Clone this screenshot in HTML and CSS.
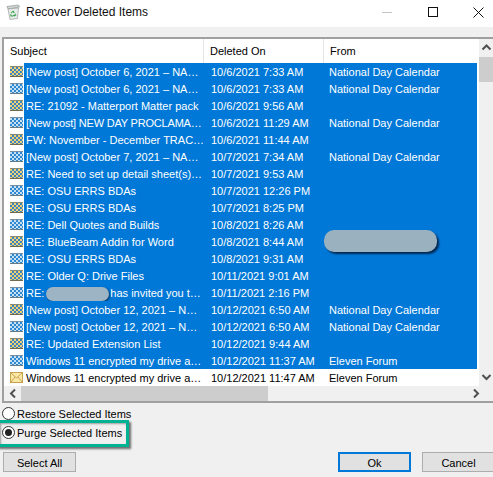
FILE: index.html
```html
<!DOCTYPE html>
<html lang="en">
<head>
<meta charset="utf-8">
<title>Recover Deleted Items</title>
<link rel="stylesheet" href="styles.css">
</head>
<body>
<div class="window">
  <header class="titlebar">
    <svg class="app-icon" width="16" height="16" viewBox="0 0 16 16" aria-hidden="true">
      <path d="M2 2.500 13.500 1l1 2-11.500 2z" fill="#d4d8d6" stroke="#8d9391" stroke-width=".7"/>
      <path d="M3 5l10.500-1-1 10.500-7.500 1z" fill="#e8ecea" stroke="#9a9f9d" stroke-width=".7"/>
      <path d="M8.300 6.500l1.600 2.200-1.300.4-1-1.200-1 1.500-1-.7zM10.500 9.400l1 2-2 .6v1l-1.700-1.500 1.700-1.400v.8l1-.3-.6-1zM5 10l1 .4.900 1.200h1v1H5.600z" fill="#35a34a"/>
    </svg>
    <span class="title">Recover Deleted Items</span>
    <div class="controls">
      <span class="ctl-min"></span>
      <span class="ctl-max"></span>
      <svg class="ctl-close" width="11" height="11" viewBox="0 0 11 11" aria-hidden="true"><path d="M.5.500l10 10M10.500.500l-10 10" stroke="#111" stroke-width="1" fill="none"/></svg>
    </div>
  </header>

  <main class="body">
    <section class="list">
      <div class="list-main">
        <div class="list-view">
          <div class="head">
            <div class="hcell hsubject">Subject</div>
            <div class="hcell hdate">Deleted On</div>
            <div class="hcell hfrom">From</div>
          </div>
          <div class="row"><i class="ico"></i><span class="sub">[New post] October 6, 2021 – NA…</span><span class="date">10/6/2021 7:33 AM</span><span class="from">National Day Calendar</span></div>
          <div class="row"><i class="ico"></i><span class="sub">[New post] October 6, 2021 – NA…</span><span class="date">10/6/2021 7:33 AM</span><span class="from">National Day Calendar</span></div>
          <div class="row"><i class="ico"></i><span class="sub">RE: 21092 - Matterport Matter pack</span><span class="date">10/6/2021 9:56 AM</span><span class="from"></span></div>
          <div class="row"><i class="ico"></i><span class="sub sub-tight">[New post] NEW DAY PROCLAMA…</span><span class="date">10/6/2021 11:29 AM</span><span class="from">National Day Calendar</span></div>
          <div class="row"><i class="ico"></i><span class="sub">FW: November - December TRAC…</span><span class="date">10/6/2021 11:44 AM</span><span class="from"></span></div>
          <div class="row"><i class="ico"></i><span class="sub">[New post] October 7, 2021 – NA…</span><span class="date">10/7/2021 7:34 AM</span><span class="from">National Day Calendar</span></div>
          <div class="row"><i class="ico"></i><span class="sub">RE: Need to set up detail sheet(s)…</span><span class="date">10/7/2021 9:53 AM</span><span class="from"></span></div>
          <div class="row"><i class="ico"></i><span class="sub">RE: OSU ERRS BDAs</span><span class="date">10/7/2021 12:26 PM</span><span class="from"></span></div>
          <div class="row"><i class="ico"></i><span class="sub">RE: OSU ERRS BDAs</span><span class="date">10/7/2021 8:25 PM</span><span class="from"></span></div>
          <div class="row"><i class="ico"></i><span class="sub">RE: Dell Quotes and Builds</span><span class="date">10/8/2021 8:26 AM</span><span class="from"></span></div>
          <div class="row"><i class="ico"></i><span class="sub">RE: BlueBeam Addin for Word</span><span class="date">10/8/2021 8:44 AM</span><span class="from from-redacted"><b class="redact-large"></b></span></div>
          <div class="row"><i class="ico"></i><span class="sub">RE: OSU ERRS BDAs</span><span class="date">10/8/2021 9:31 AM</span><span class="from"></span></div>
          <div class="row"><i class="ico"></i><span class="sub">RE: Older Q: Drive Files</span><span class="date">10/11/2021 9:01 AM</span><span class="from"></span></div>
          <div class="row"><i class="ico"></i><span class="sub">RE:<b class="redact-small"></b>has invited you t…</span><span class="date">10/11/2021 2:16 PM</span><span class="from"></span></div>
          <div class="row"><i class="ico"></i><span class="sub">[New post] October 12, 2021 – N…</span><span class="date">10/12/2021 6:50 AM</span><span class="from">National Day Calendar</span></div>
          <div class="row"><i class="ico"></i><span class="sub">[New post] October 12, 2021 – N…</span><span class="date">10/12/2021 6:50 AM</span><span class="from">National Day Calendar</span></div>
          <div class="row"><i class="ico"></i><span class="sub">RE: Updated Extension List</span><span class="date">10/12/2021 9:44 AM</span><span class="from"></span></div>
          <div class="row"><i class="ico"></i><span class="sub">Windows 11 encrypted my drive a…</span><span class="date">10/12/2021 11:37 AM</span><span class="from">Eleven Forum</span></div>
          <div class="row row-plain">
            <svg class="env" width="13" height="11" viewBox="0 0 13 11" aria-hidden="true"><rect x=".5" y=".5" width="12" height="10" fill="#fbe7a6" stroke="#c9a24e"/><path d="M.5.500 6.500 6l6-5.500M.5 10.500 5 5M12.500 10.500 8 5" fill="none" stroke="#c9a24e"/></svg>
            <span class="sub">Windows 11 encrypted my drive a…</span><span class="date">10/12/2021 11:47 AM</span><span class="from">Eleven Forum</span>
          </div>
        </div>
        <div class="vscroll">
          <svg class="arrow" width="15" height="18" viewBox="0 0 15 18" aria-hidden="true"><path d="M3.500 10.500l4-4 4 4" fill="none" stroke="#505050" stroke-width="2"/></svg>
          <div class="vthumb"></div>
          <svg class="arrow arrow-bottom" width="15" height="18" viewBox="0 0 15 18" aria-hidden="true"><path d="M3.500 7l4 4 4-4" fill="none" stroke="#505050" stroke-width="2"/></svg>
        </div>
      </div>
      <div class="hscroll">
        <svg class="harrow" width="17" height="15" viewBox="0 0 17 15" aria-hidden="true"><path d="M11 3.500l-4 4 4 4" fill="none" stroke="#505050" stroke-width="2"/></svg>
        <div class="hthumb"></div>
        <svg class="harrow harrow-right" width="17" height="15" viewBox="0 0 17 15" aria-hidden="true"><path d="M6 3.500l4 4-4 4" fill="none" stroke="#505050" stroke-width="2"/></svg>
      </div>
    </section>

    <div class="options">
      <label class="radio"><span class="dot"></span>Restore Selected Items</label>
      <label class="radio"><span class="dot dot-on"></span>Purge Selected Items</label>
      <div class="highlight"></div>
    </div>

    <footer class="buttons">
      <button class="btn" type="button">Select All</button>
      <div class="btn-right">
        <button class="btn btn-default" type="button">Ok</button>
        <button class="btn" type="button">Cancel</button>
      </div>
    </footer>
  </main>
</div>
</body>
</html>
```

FILE: styles.css
```css
* { box-sizing: border-box; }
html, body { margin: 0; padding: 0; overflow: hidden; }
body {
  width: 493px;
  height: 477px;
  background: #f0f0f0;
  font-family: "Liberation Sans", Arial, sans-serif;
  font-size: 11px;
  color: #000;
}
.window { width: 493px; height: 477px; display: flex; flex-direction: column; overflow: hidden; }

.titlebar { height: 27px; background: #fff; display: flex; align-items: center; padding-left: 5px; padding-bottom: 3px; flex: none; }
.app-icon { flex: none; }
.title { margin-left: 5px; font-size: 12px; color: #111; }
.controls { margin-left: auto; display: flex; align-items: center; height: 100%; }
.ctl-min { width: 10px; height: 1px; background: #c4c4c4; margin-right: 36px; }
.ctl-max { width: 10px; height: 10px; border: 1px solid #111; margin-right: 35px; }
.ctl-close { margin-right: 9px; }

.body { flex: 1; padding: 10px 0 0 2px; display: flex; flex-direction: column; min-height: 0; }

.list { border: 1px solid #a0a0a0; border-width: 2px 0 2px 2px; height: 366px; background: #f0f0f0; flex: none; }
.list-main { display: flex; height: 347px; }
.list-view { width: 475px; background: #fff; flex: none; }

.head { display: grid; grid-template-columns: 200px 120px 155px; height: 24px; background: #fff; }
.hcell { display: flex; align-items: center; border-right: 1px solid #e5e5e5; padding-left: 6px; }
.hfrom { border-right: 0; }

.row { display: grid; grid-template-columns: 20px 179px 120px 154px; height: 17px; line-height: 17px; white-space: nowrap; align-items: center; }
.row > span { background: #0078d7; color: #fff; height: 17px; padding-top: 1px; line-height: 16px; overflow: hidden; }
.row-plain > span { background: #fff; color: #000; }
.sub { padding-left: 2px; }
.sub-tight { letter-spacing: -.2px; }
.date { padding-left: 8px; }
.from { padding-left: 6px; }
.row > .from-redacted { position: relative; overflow: visible; }

.ico {
  display: block;
  width: 13px;
  height: 11px;
  margin-left: 6px;
  background: repeating-conic-gradient(#3f86c0 0 25%, #ecd078 0 50%) 0 0 / 4px 4px;
  border-top: 1px solid #8a8a70;
  border-bottom: 1px solid #6f6a50;
}
.row:nth-child(odd) .ico { background: repeating-conic-gradient(#2f88d0 0 25%, #c4e0f5 0 50%) 0 0 / 4px 4px; border-top-color: #7a90a0; border-bottom-color: #6a7a80; }
.env { margin-left: 6px; display: block; }

.redact-small {
  display: inline-block;
  width: 63px;
  height: 14px;
  margin: 0 1px 0 2px;
  vertical-align: middle;
  border-radius: 7px;
  background: #9cb4c4;
  box-shadow: 1px 1px 2px rgba(0, 20, 50, .7);
}
.redact-large {
  position: absolute;
  left: 1px;
  top: -3px;
  width: 113px;
  height: 22px;
  border-radius: 10px;
  background: #9ab2c0;
  box-shadow: 2px 2px 2px rgba(0, 20, 50, .8);
}

.vscroll { flex: none; width: 16px; display: flex; flex-direction: column; background: #f0f0f0; }
.arrow { flex: none; }
.arrow-bottom { margin-top: auto; }
.vthumb { height: 25px; background: #cdcdcd; }

.hscroll { height: 15px; display: flex; background: #f0f0f0; }
.harrow { flex: none; }
.harrow-right { margin-left: 200px; }
.hthumb { width: 247px; background: #cdcdcd; }

.options { position: relative; padding-top: 2px; display: flex; flex-direction: column; gap: 2px; }
.radio { display: flex; align-items: center; height: 17px; color: #000; }
.dot { width: 13px; height: 13px; border: 1px solid #333; border-radius: 50%; background: #fff; margin-right: 2px; flex: none; position: relative; }
.dot-on::after { content: ""; position: absolute; left: 2px; top: 2px; width: 7px; height: 7px; border-radius: 50%; background: #222; }
.highlight {
  position: absolute;
  left: -5px;
  top: 17px;
  width: 132px;
  height: 27px;
  border: 3px solid #00b294;
  box-shadow: 2px 2px 2px rgba(0, 0, 0, .55), inset 1px 1px 2px rgba(0, 0, 0, .35);
}

.buttons { display: flex; justify-content: space-between; padding: 0 0 0 1px; margin-top: 11px; }
.btn-right { display: flex; gap: 11px; margin-right: -2px; }
.btn {
  width: 73px;
  height: 20px;
  padding: 1px 0 0;
  font: inherit;
  color: #000;
  background: #e1e1e1;
  border: 1px solid #adadad;
}
.btn-default { border: 2px solid #0078d7; }
```
